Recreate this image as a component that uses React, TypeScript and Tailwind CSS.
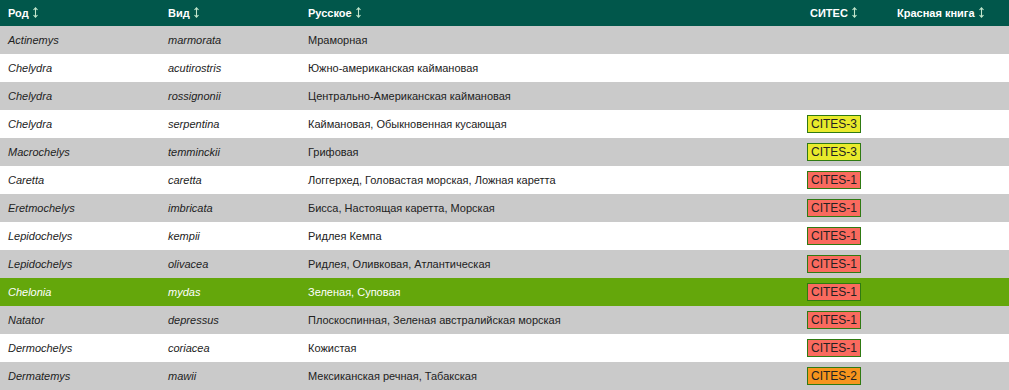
type Row = {
    genus: string;
    species: string;
    ru: string;
    cites?: 1 | 2 | 3;
};

const rows: Row[] = [
    { genus: 'Actinemys', species: 'marmorata', ru: 'Мраморная' },
    { genus: 'Chelydra', species: 'acutirostris', ru: 'Южно-американская каймановая' },
    { genus: 'Chelydra', species: 'rossignonii', ru: 'Центрально-Американская каймановая' },
    { genus: 'Chelydra', species: 'serpentina', ru: 'Каймановая, Обыкновенная кусающая', cites: 3 },
    { genus: 'Macrochelys', species: 'temminckii', ru: 'Грифовая', cites: 3 },
    { genus: 'Caretta', species: 'caretta', ru: 'Логгерхед, Головастая морская, Ложная каретта', cites: 1 },
    { genus: 'Eretmochelys', species: 'imbricata', ru: 'Бисса, Настоящая каретта, Морская', cites: 1 },
    { genus: 'Lepidochelys', species: 'kempii', ru: 'Ридлея Кемпа', cites: 1 },
    { genus: 'Lepidochelys', species: 'olivacea', ru: 'Ридлея, Оливковая, Атлантическая', cites: 1 },
    { genus: 'Chelonia', species: 'mydas', ru: 'Зеленая, Суповая', cites: 1 },
    { genus: 'Natator', species: 'depressus', ru: 'Плоскоспинная, Зеленая австралийская морская', cites: 1 },
    { genus: 'Dermochelys', species: 'coriacea', ru: 'Кожистая', cites: 1 },
    { genus: 'Dermatemys', species: 'mawii', ru: 'Мексиканская речная, Табакская', cites: 2 },
];

const badgeColor: Record<number, string> = {
    1: 'bg-[#fa6a5e]',
    2: 'bg-[#f7941d]',
    3: 'bg-[#e9ea2c]',
};

// sort arrow (↕) drawn as a small svg so it has the tall thin look
const Arrow = () => (
    <svg width="5" height="11" viewBox="0 0 5 11" className="inline-block ml-[4px] align-[-1px]">
        <path d="M2.5 1 V10 M0.5 3 L2.5 0.8 L4.5 3 M0.5 8 L2.5 10.2 L4.5 8" stroke="#c3e6cc" strokeWidth="1.1" fill="none" />
    </svg>
);

const cols = 'grid grid-cols-[160px_140px_499px_90px_1fr] items-center';

export default function App() {
    return (
        <div className="w-[1009px] h-[390px] overflow-hidden bg-white text-[11px] text-[#222] [font-family:'Liberation_Sans',Arial,sans-serif]">
            {/* header */}
            <div className={`${cols} h-[26px] bg-[#01574b] text-white font-bold`}>
                <div className="pl-2">Род<Arrow /></div>
                <div className="pl-2">Вид<Arrow /></div>
                <div className="pl-2">Русское<Arrow /></div>
                <div className="pl-[11px]">СИТЕС<Arrow /></div>
                <div className="pl-2">Красная книга<Arrow /></div>
            </div>

            {rows.map((r, i) => {
                const active = r.genus === 'Chelonia';
                const bg = active ? 'bg-[#64a70b] text-white' : i % 2 === 0 ? 'bg-[#cacaca]' : 'bg-white';
                return (
                    <div key={i} className={`${cols} h-[28px] ${bg}`}>
                        <div className="pl-2 italic">{r.genus}</div>
                        <div className="pl-2 italic">{r.species}</div>
                        <div className="pl-2">{r.ru}</div>
                        <div className="pl-2">
                            {r.cites && (
                                <span
                                    className={`inline-block w-[54px] h-[18px] leading-[16px] border border-[#2f7a12] text-center text-[#222] text-[12px] ${badgeColor[r.cites]}`}
                                >
                                    CITES-{r.cites}
                                </span>
                            )}
                        </div>
                        <div />
                    </div>
                );
            })}
        </div>
    );
}
